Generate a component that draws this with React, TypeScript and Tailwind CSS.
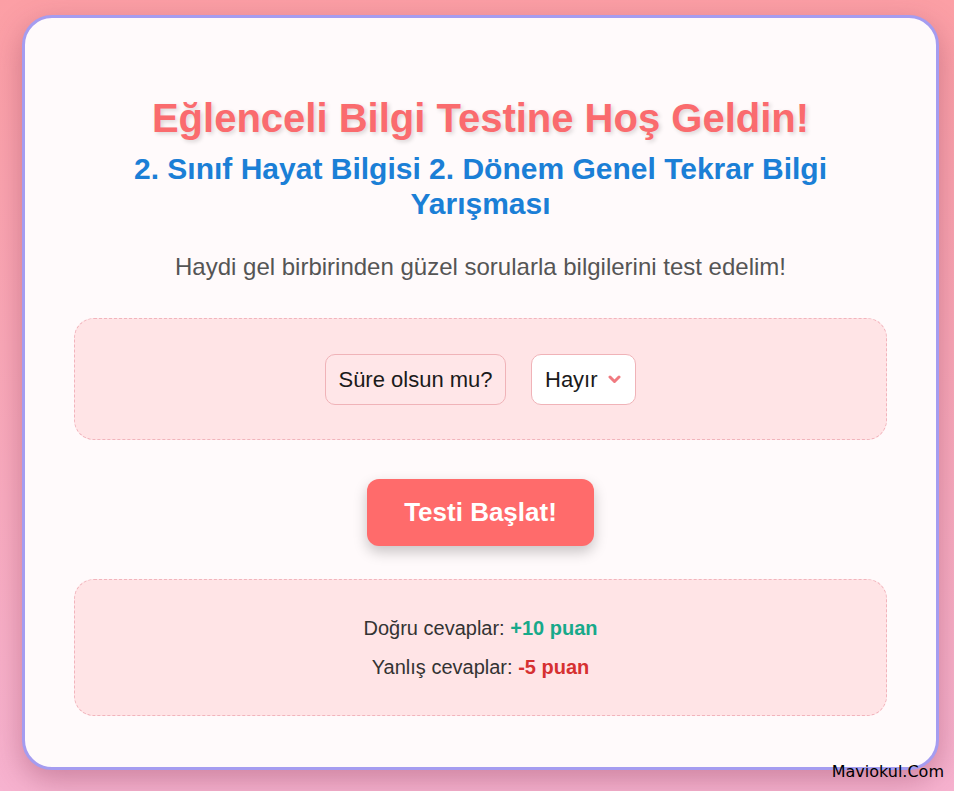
import React from "react";

export default function App() {
  return (
    <div
      className="relative min-h-[791px] w-full overflow-hidden bg-gradient-to-b from-[#fc9fa5] to-[#f7b3d0] pt-[15px]"
      style={{ fontFamily: '"Liberation Sans", Arial, sans-serif' }}
    >
      <div className="ml-[22px] w-[917px] h-[755px] rounded-[30px] border-[3px] border-[#a59cf0] bg-[#fffafb] px-[49px] pt-[77px] shadow-[0_10px_30px_rgba(120,40,70,0.35)]">
        <h1 className="text-center text-[40px] leading-[46px] font-bold text-[#fa6b6e] [text-shadow:2px_2px_4px_rgba(0,0,0,0.15)]">
          Eğlenceli Bilgi Testine Hoş Geldin!
        </h1>
        <h2 className="mt-[10px] text-center text-[30px] leading-[35px] font-bold text-[#1b7fd6]">
          2. Sınıf Hayat Bilgisi 2. Dönem Genel Tekrar Bilgi Yarışması
        </h2>
        <p className="mt-[32px] text-center text-[24px] leading-[28px] text-[#555555]">
          Haydi gel birbirinden güzel sorularla bilgilerini test edelim!
        </p>

        <div className="mt-[37px] flex h-[122px] items-center justify-center gap-[25px] rounded-[20px] border border-dashed border-[#f2b4bc] bg-[#ffe4e6]">
          <div className="flex h-[51px] w-[181px] items-center justify-center rounded-[10px] border border-[#f0b3b8] bg-[#ffe6e8] text-[22px] text-[#1a1a1a]">
            Süre olsun mu?
          </div>
          <div className="flex h-[51px] w-[105px] items-center justify-between rounded-[10px] border border-[#f0b3b8] bg-white pl-[13px] pr-[14px] text-[22px] text-[#1a1a1a]">
            <span>Hayır</span>
            <svg width="13" height="9" viewBox="0 0 13 9" fill="none">
              <path d="M2 2 L6.5 6.5 L11 2" stroke="#f07a80" strokeWidth="3" strokeLinecap="round" strokeLinejoin="round" />
            </svg>
          </div>
        </div>

        <div className="mt-[39px] flex justify-center">
          <button className="h-[67px] w-[227px] rounded-[12px] bg-[#ff6b6b] text-[26px] font-bold text-white shadow-[0_6px_14px_rgba(0,0,0,0.22)]">
            Testi Başlat!
          </button>
        </div>

        <div className="mt-[33px] flex h-[137px] flex-col items-center gap-[16px] rounded-[20px] border border-dashed border-[#f2b4bc] bg-[#ffe4e6] pt-[37px] text-[20px] leading-[23px] text-[#333333]">
          <p>
            Doğru cevaplar: <span className="font-bold text-[#18a98a]">+10 puan</span>
          </p>
          <p>
            Yanlış cevaplar: <span className="font-bold text-[#d63031]">-5 puan</span>
          </p>
        </div>
      </div>

      <div
        className="absolute right-[10px] top-[761px] text-[16px] leading-[22px] text-black"
        style={{ fontFamily: '"DejaVu Sans", Verdana, sans-serif' }}
      >
        Maviokul.Com
      </div>
    </div>
  );
}
